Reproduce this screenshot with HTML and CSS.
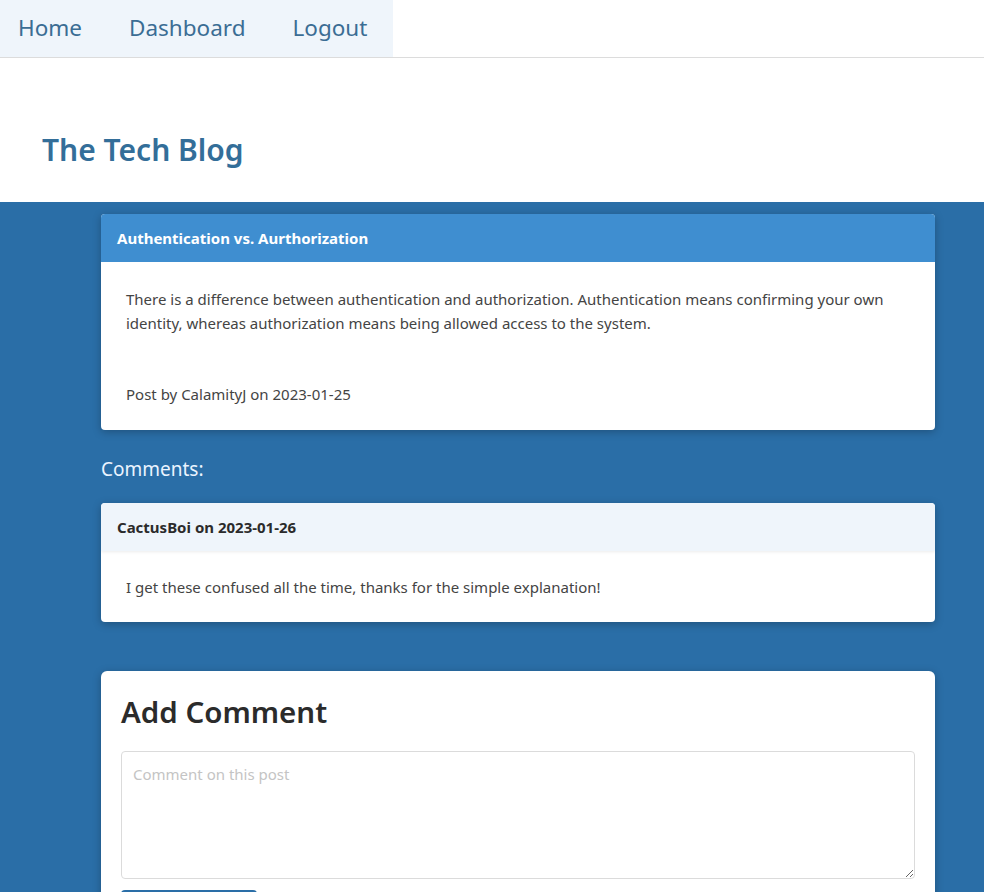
FILE: index.html
```html
<!DOCTYPE html>
<html>
<head>
<meta charset="utf-8">
<title>The Tech Blog</title>
<link rel="stylesheet" href="styles.css">
</head>
<body>
<nav class="topnav">
  <div class="nav-links">
    <a href="#" class="nav-link">Home</a>
    <a href="#" class="nav-link">Dashboard</a>
    <a href="#" class="nav-link">Logout</a>
  </div>
</nav>
<header class="site-header">
  <h1 class="site-title">The Tech Blog</h1>
</header>
<main class="main">
  <div class="container">
    <article class="card post-card">
      <div class="card-header post-header">Authentication vs. Aurthorization</div>
      <div class="card-body post-body">
        <p class="post-text">There is a difference between authentication and authorization. Authentication means confirming your own identity, whereas authorization means being allowed access to the system.</p>
        <p class="post-meta">Post by CalamityJ on 2023-01-25</p>
      </div>
    </article>
    <h2 class="comments-title">Comments:</h2>
    <div class="card comment-card">
      <div class="card-header comment-header">CactusBoi on 2023-01-26</div>
      <div class="card-body comment-body">I get these confused all the time, thanks for the simple explanation!</div>
    </div>
    <form class="card add-card">
      <h2 class="add-title">Add Comment</h2>
      <textarea class="comment-input" placeholder="Comment on this post"></textarea>
      <button type="submit" class="submit-btn">Submit</button>
    </form>
  </div>
</main>
</body>
</html>
```
FILE: styles.css
```css
* { box-sizing: border-box; }
html, body { margin: 0; padding: 0; }
body {
  font-family: "Noto Sans", "Open Sans", sans-serif;
  color: #333;
  background: #2a6ea7;
}
.topnav {
  background: #fff;
  border-bottom: 1px solid #dcdcdc;
  height: 58px;
}
.nav-links {
  display: flex;
  width: 393px;
  height: 57px;
  background: #eff5fb;
  align-items: center;
  padding-left: 18px;
  gap: 47px;
}
.nav-link {
  color: #3b6d94;
  text-decoration: none;
  font-size: 22.5px;
  line-height: 1;
}
.site-header {
  background: #fff;
  height: 144px;
  padding: 74px 0 0 42px;
}
.site-title {
  margin: 0;
  color: #336e99;
  font-size: 30px;
  font-weight: 600;
  line-height: 1.2;
}
.main {
  padding: 12px 0 0 0;
}
.container {
  width: 834px;
  margin-left: 101px;
}
.card {
  background: #fff;
  border-radius: 4px;
  box-shadow: 0 2px 8px rgba(0, 0, 0, 0.25);
  overflow: hidden;
}
.card-header {
  height: 48px;
  display: flex;
  align-items: center;
  padding-left: 16px;
  font-weight: 700;
  font-size: 15px;
}
.post-header {
  background: #3f8ed0;
  color: #fff;
}
.post-body {
  padding: 25px 25px 24px 25px;
}
.post-text {
  margin: 0;
  font-size: 15px;
  line-height: 24px;
  color: #444;
}
.post-meta {
  margin: 47px 0 0;
  font-size: 15px;
  line-height: 24px;
  color: #444;
}
.comments-title {
  margin: 27px 0 22px;
  color: #eaf4ff;
  font-size: 19px;
  font-weight: 400;
  line-height: 24px;
}
.comment-header {
  background: #eff5fb;
  color: #2b2b2b;
  box-shadow: 0 1px 3px rgba(0, 0, 0, 0.08);
}
.comment-body {
  padding: 24px 25px 23px 25px;
  font-size: 15px;
  line-height: 24px;
  color: #444;
}
.add-card {
  margin-top: 49px;
  border-radius: 6px;
  padding: 19px 20px 40px 20px;
  display: flex;
  flex-direction: column;
}
.add-title {
  margin: 0 0 17px;
  font-size: 29.5px;
  font-weight: 600;
  line-height: 44px;
  color: #2b2b2b;
}
.comment-input {
  width: 794px;
  height: 128px;
  border: 1px solid #dbdbdb;
  border-radius: 4px;
  padding: 12px 11px;
  font-family: "Noto Sans", "Open Sans", sans-serif;
  font-size: 15px;
  color: #444;
  resize: vertical;
}
.comment-input::placeholder { color: #c4c4c4; }
.submit-btn {
  margin-top: 11px;
  align-self: flex-start;
  width: 136px;
  height: 38px;
  background: #2a6ea7;
  color: #fff;
  border: none;
  border-radius: 4px;
  font-family: "Noto Sans", "Open Sans", sans-serif;
  font-size: 15px;
}
```
